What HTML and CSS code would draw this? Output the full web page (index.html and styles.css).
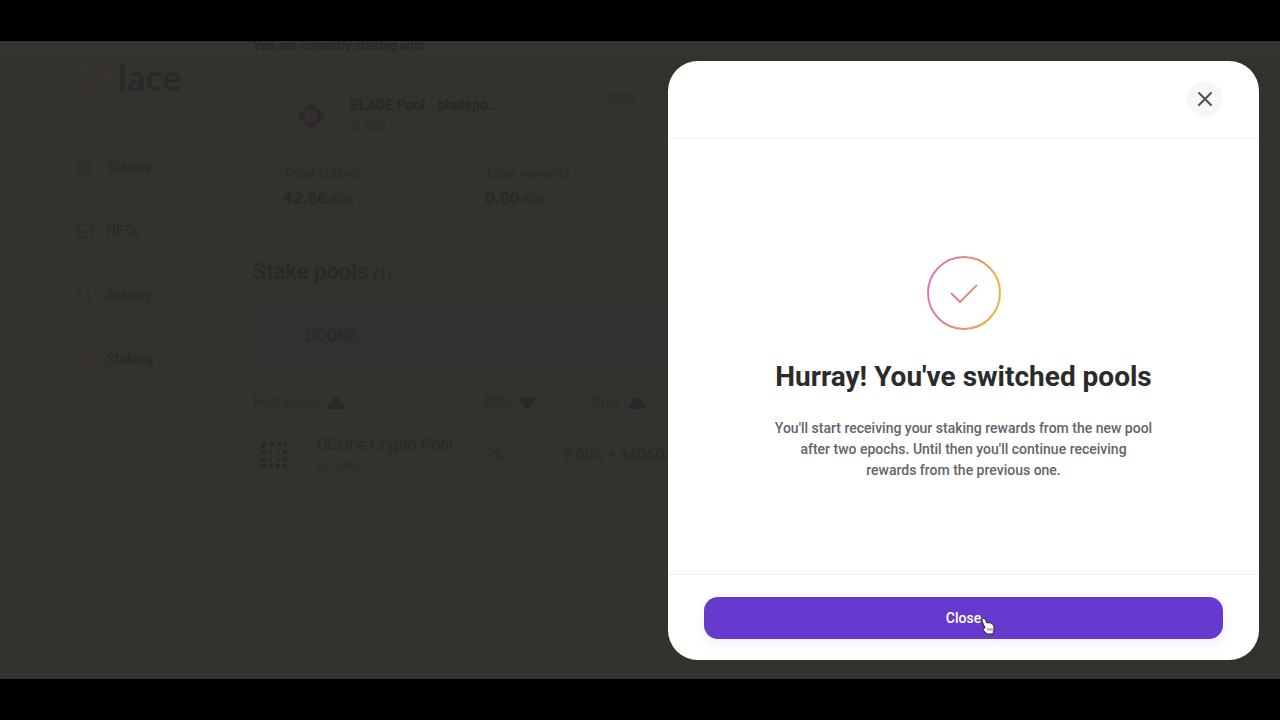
FILE: index.html
```html
<!DOCTYPE html>
<html lang="en">
<head>
    <meta charset="UTF-8">
    <meta name="viewport" content="width=device-width, initial-scale=1.0">
    <title>Lace - Staking</title>
    <link rel="stylesheet" href="styles.css">
</head>
<body>
    <div class="app">
        <aside class="sidebar">
            <a href="#" class="logo">
                <svg width="36" height="36" viewBox="0 0 36 36" fill="none" stroke="#40302f">
                    <circle cx="18" cy="18" r="16"/>
                    <circle cx="19" cy="16" r="13"/>
                    <circle cx="17" cy="18" r="10"/>
                    <path d="M5 24q3 9 15 8M30 10q4 9-2 16"/>
                </svg>
                <span>lace</span>
            </a>
            <nav class="nav">
                <a href="#">
                    <svg width="18" height="18" viewBox="0 0 18 18"><circle cx="4" cy="5" r="3"/><circle cx="12" cy="5" r="3"/><circle cx="4" cy="13" r="3"/><circle cx="12" cy="13" r="3"/></svg>
                    Tokens
                </a>
                <a href="#">
                    <svg width="18" height="18" viewBox="0 0 18 18"><rect x="1" y="2" width="15" height="14" rx="1"/><path d="M1 10l4-2 4 3 4-3 3 2"/></svg>
                    NFTs
                </a>
                <a href="#">
                    <svg width="18" height="18" viewBox="0 0 18 18"><path d="M4 13V3M1 6l3-3 3 3M12 5v10M9 12l3 3 3-3"/></svg>
                    Activity
                </a>
                <a href="#" class="active">
                    <svg width="18" height="18" viewBox="0 0 18 18"><ellipse cx="9" cy="4" rx="6" ry="2"/><path d="M3 4v10c0 3 12 3 12 0V4M3 8c0 3 12 3 12 0M3 11c0 3 12 3 12 0"/></svg>
                    Staking
                </a>
            </nav>
        </aside>

        <main class="content">
            <h3 class="staking-title">You are currently staking with</h3>
            <section class="card">
                <div class="pool">
                    <svg width="28" height="28" viewBox="0 0 28 28">
                        <path d="M14 0l14 14-14 14L0 14z" fill="#2a282a"/>
                        <circle cx="14" cy="14" r="7" fill="#392d2f"/>
                        <path d="M14 7v14M9 14h10" stroke="#302a2b"/>
                    </svg>
                    <div class="pool-name">
                        <strong>BLADE Pool - bladepo...</strong>
                        <span>BLADE</span>
                    </div>
                    <div class="pool-ros">
                        <span>ROS</span>
                        <strong>-</strong>
                    </div>
                </div>
                <div class="totals">
                    <div><span>Total staked</span><p><strong>42.66</strong> ADA</p></div>
                    <div><span>Total rewards</span><p><strong>0.00</strong> ADA</p></div>
                </div>
            </section>

            <h2 class="pools-title">Stake pools<small>(1)</small></h2>
            <label class="search">
                <svg width="16" height="16" viewBox="0 0 16 16" fill="none" stroke="#392e33" stroke-width="2"><circle cx="7" cy="7" r="5"/><path d="M11 11l4 4"/></svg>
                <input type="text" value="DCONE" aria-label="Search pools">
            </label>
            <table class="pools">
                <thead>
                    <tr>
                        <th class="col-name">Pool name <svg width="18" height="12" viewBox="0 0 18 12"><path d="M9 0q2 0 3 2l5 7q2 3-1 3H2q-3 0-1-3l5-7q1-2 3-2z"/></svg></th>
                        <th class="col-ros">ROS <svg width="18" height="12" viewBox="0 0 18 12"><path d="M9 12q2 0 3-2l5-7q2-3-1-3H2Q-1 0 1 3l5 7q1 2 3 2z"/></svg></th>
                        <th class="col-cost">Cost <svg width="18" height="12" viewBox="0 0 18 12"><path d="M9 0q2 0 3 2l5 7q2 3-1 3H2q-3 0-1-3l5-7q1-2 3-2z"/></svg></th>
                        <th></th>
                    </tr>
                </thead>
                <tbody>
                    <tr>
                        <td>
                            <div class="pool-cell">
                                <svg width="26" height="26" viewBox="0 0 26 26" fill="none" stroke="#282828" stroke-width="4">
                                    <path d="M2 2h22v22H2z" stroke-dasharray="4 3"/>
                                    <path d="M8 8l3 3M18 7l-2 3M8 18l3-2M16 16l3 3" stroke-width="2"/>
                                </svg>
                                <div>
                                    <b>DCOne Crypto Pool</b>
                                    <span>DCONE</span>
                                </div>
                            </div>
                        </td>
                        <td class="col-ros">-%</td>
                        <td class="col-cost">0.00% + 340ADA</td>
                        <td></td>
                    </tr>
                </tbody>
            </table>
        </main>

        <div class="drawer" role="dialog" aria-labelledby="drawer-title">
            <header class="drawer-header">
                <button class="icon-btn" aria-label="Close dialog">
                    <svg width="16" height="16" viewBox="0 0 16 16" fill="none" stroke="#505050" stroke-width="2" stroke-linecap="round"><path d="M2 2l12 12M14 2L2 14"/></svg>
                </button>
            </header>
            <div class="drawer-body">
                <svg class="success" width="76" height="76" viewBox="0 0 76 76" fill="none" stroke="url(#grad)" stroke-width="2">
                    <defs>
                        <linearGradient id="grad" gradientUnits="userSpaceOnUse" x1="0" y1="30" x2="76" y2="46">
                            <stop offset="0" stop-color="#dd76ba"/>
                            <stop offset="0.5" stop-color="#e38a7c"/>
                            <stop offset="1" stop-color="#f0b733"/>
                        </linearGradient>
                    </defs>
                    <circle cx="38" cy="38" r="36"/>
                    <path d="M25 38l9 9 17-17"/>
                </svg>
                <h1 id="drawer-title">Hurray! You've switched pools</h1>
                <p>You'll start receiving your staking rewards from the new pool<br>after two epochs. Until then you'll continue receiving<br>rewards from the previous one.</p>
            </div>
            <footer class="drawer-footer">
                <button class="btn">
                    <span class="btn-label">Close
                        <svg class="cursor" width="14" height="18" viewBox="0 0 14 18" fill="#fff" stroke="#222" stroke-linejoin="round"><path d="M1 2q2-2 3 0l2 4q1-1 2 0 2-1 3 1 2 0 2 3v3l-1 4H6l-4-4q-1-2 2-2L1 4z"/><path d="M7 11v3M9 11v3M11 11v3" stroke="#777"/></svg>
                    </span>
                </button>
            </footer>
        </div>
    </div>
</body>
</html>
```
FILE: styles.css
```css
* {
    box-sizing: border-box;
}
body {
    font-family: Roboto, "Liberation Sans", sans-serif;
    margin: 0;
    padding: 41px 0;
    height: 100vh;
    background: #000;
    color: #282825;
}
h1, h2, h3, p {
    margin: 0;
}
button, input {
    font-family: inherit;
}
.app {
    position: relative;
    display: flex;
    height: 100%;
    overflow: hidden;
    background: linear-gradient(#333333, #33332e 16px);
}

/* sidebar */
.sidebar {
    width: 253px;
    flex: none;
    padding: 18px 0 0 76px;
}
.logo {
    display: flex;
    align-items: center;
    gap: 6px;
    height: 36px;
    color: #29292a;
    font-family: Lato, sans-serif;
    font-size: 36px;
    font-weight: 700;
    text-decoration: none;
}
.nav {
    display: flex;
    flex-direction: column;
    gap: 40px;
    margin-top: 60px;
}
.nav a {
    display: flex;
    align-items: center;
    gap: 12px;
    height: 24px;
    color: #282825;
    font-size: 14px;
    text-decoration: none;
}
.nav svg {
    fill: none;
    stroke: #282825;
}
.nav .active {
    font-weight: 500;
}
.nav .active svg {
    stroke: #3b2e2a;
}

/* staking page */
.content {
    flex: 1;
    min-width: 0;
    padding-right: 40px;
}
.staking-title {
    margin-top: -4px;
    font-size: 13px;
    font-weight: 500;
    line-height: 18px;
}
.card {
    padding: 33px 30px 0;
}
.card span {
    color: #2b2b28;
}
.pool {
    display: flex;
    align-items: center;
    height: 56px;
    padding-left: 14px;
}
.pool-name {
    width: 258px;
    margin-left: 25px;
}
.pool-name strong, .pool-name span,
.pool-ros strong, .pool-ros span {
    display: block;
    font-size: 14px;
    line-height: 22px;
}
.pool-name span {
    font-size: 12px;
}
.pool-ros {
    margin-top: -8px;
}
.pool-ros strong, .pool-ros span {
    line-height: 26px;
}
.totals {
    display: flex;
    margin-top: 18px;
    font-size: 14px;
    line-height: 24px;
}
.totals div {
    width: 202px;
}
.totals p {
    font-size: 12px;
}
.totals strong {
    font-size: 17px;
}
.pools-title {
    margin-top: 44px;
    font-size: 22px;
    font-weight: 500;
    line-height: 32px;
}
.pools-title small {
    margin-left: 5px;
    font-size: 15px;
    font-weight: 400;
}
.search {
    display: flex;
    align-items: center;
    gap: 16px;
    height: 64px;
    margin-top: 13px;
    padding: 0 20px;
    border-radius: 12px;
    background: #313131;
}
.search input {
    flex: 1;
    padding: 0;
    border: none;
    outline: none;
    background: none;
    color: #282828;
    font-size: 16px;
}
.pools {
    width: 100%;
    margin-top: 20px;
    border-collapse: collapse;
    table-layout: fixed;
}
.pools th, .pools td {
    padding: 0;
    font-weight: 400;
    text-align: left;
}
.pools th {
    height: 30px;
    color: #2a2a28;
    font-size: 14px;
}
.pools th svg {
    margin-left: 4px;
    fill: #29292d;
    vertical-align: -2px;
}
.pools td {
    height: 76px;
    font-size: 15px;
}
.col-name {
    width: 231px;
}
.col-ros {
    width: 76px;
}
.pools td.col-ros {
    padding-left: 4px;
}
.pools .col-cost {
    width: 118px;
    text-align: center;
    white-space: nowrap;
}
.pool-cell {
    display: flex;
    align-items: center;
    gap: 30px;
    padding-left: 8px;
}
.pool-cell b, .pool-cell span {
    display: block;
    font-size: 16px;
    font-weight: 400;
    line-height: 22px;
}
.pool-cell span {
    color: #2b2b28;
    font-size: 13px;
    line-height: 20px;
}

/* drawer */
.drawer {
    position: absolute;
    top: 20px;
    right: 21px;
    bottom: 19px;
    display: flex;
    flex-direction: column;
    width: 591px;
    max-width: 90%;
    border-radius: 30px;
    background: #fff;
}
.drawer-header {
    display: flex;
    align-items: center;
    justify-content: flex-end;
    height: 78px;
    padding: 0 36px;
    border-bottom: 2px solid #f6f6f6;
}
.icon-btn {
    display: flex;
    align-items: center;
    justify-content: center;
    width: 36px;
    height: 36px;
    padding: 0;
    border: none;
    border-radius: 50%;
    background: #f7f7f7;
    cursor: pointer;
}
.drawer-body {
    display: flex;
    flex: 1;
    flex-direction: column;
    align-items: center;
    justify-content: center;
    padding: 22px 90px 0;
    text-align: center;
}
.drawer-body h1 {
    margin-top: 28px;
    color: #2b2b2b;
    font-size: 28px;
    line-height: 36px;
}
.drawer-body p {
    margin-top: 23px;
    color: #64646a;
    font-size: 14px;
    font-weight: 500;
    line-height: 21px;
}
.drawer-footer {
    padding: 22px 36px 21px;
    border-top: 1px solid #eee;
}
.btn {
    width: 100%;
    height: 42px;
    border: none;
    border-radius: 14px;
    background: #663acf;
    box-shadow: 0 6px 12px rgba(102, 58, 207, 0.08);
    color: #fff;
    font-size: 14px;
    font-weight: 500;
    cursor: pointer;
}
.btn-label {
    position: relative;
}
.cursor {
    position: absolute;
    top: 7px;
    left: 100%;
}
```
